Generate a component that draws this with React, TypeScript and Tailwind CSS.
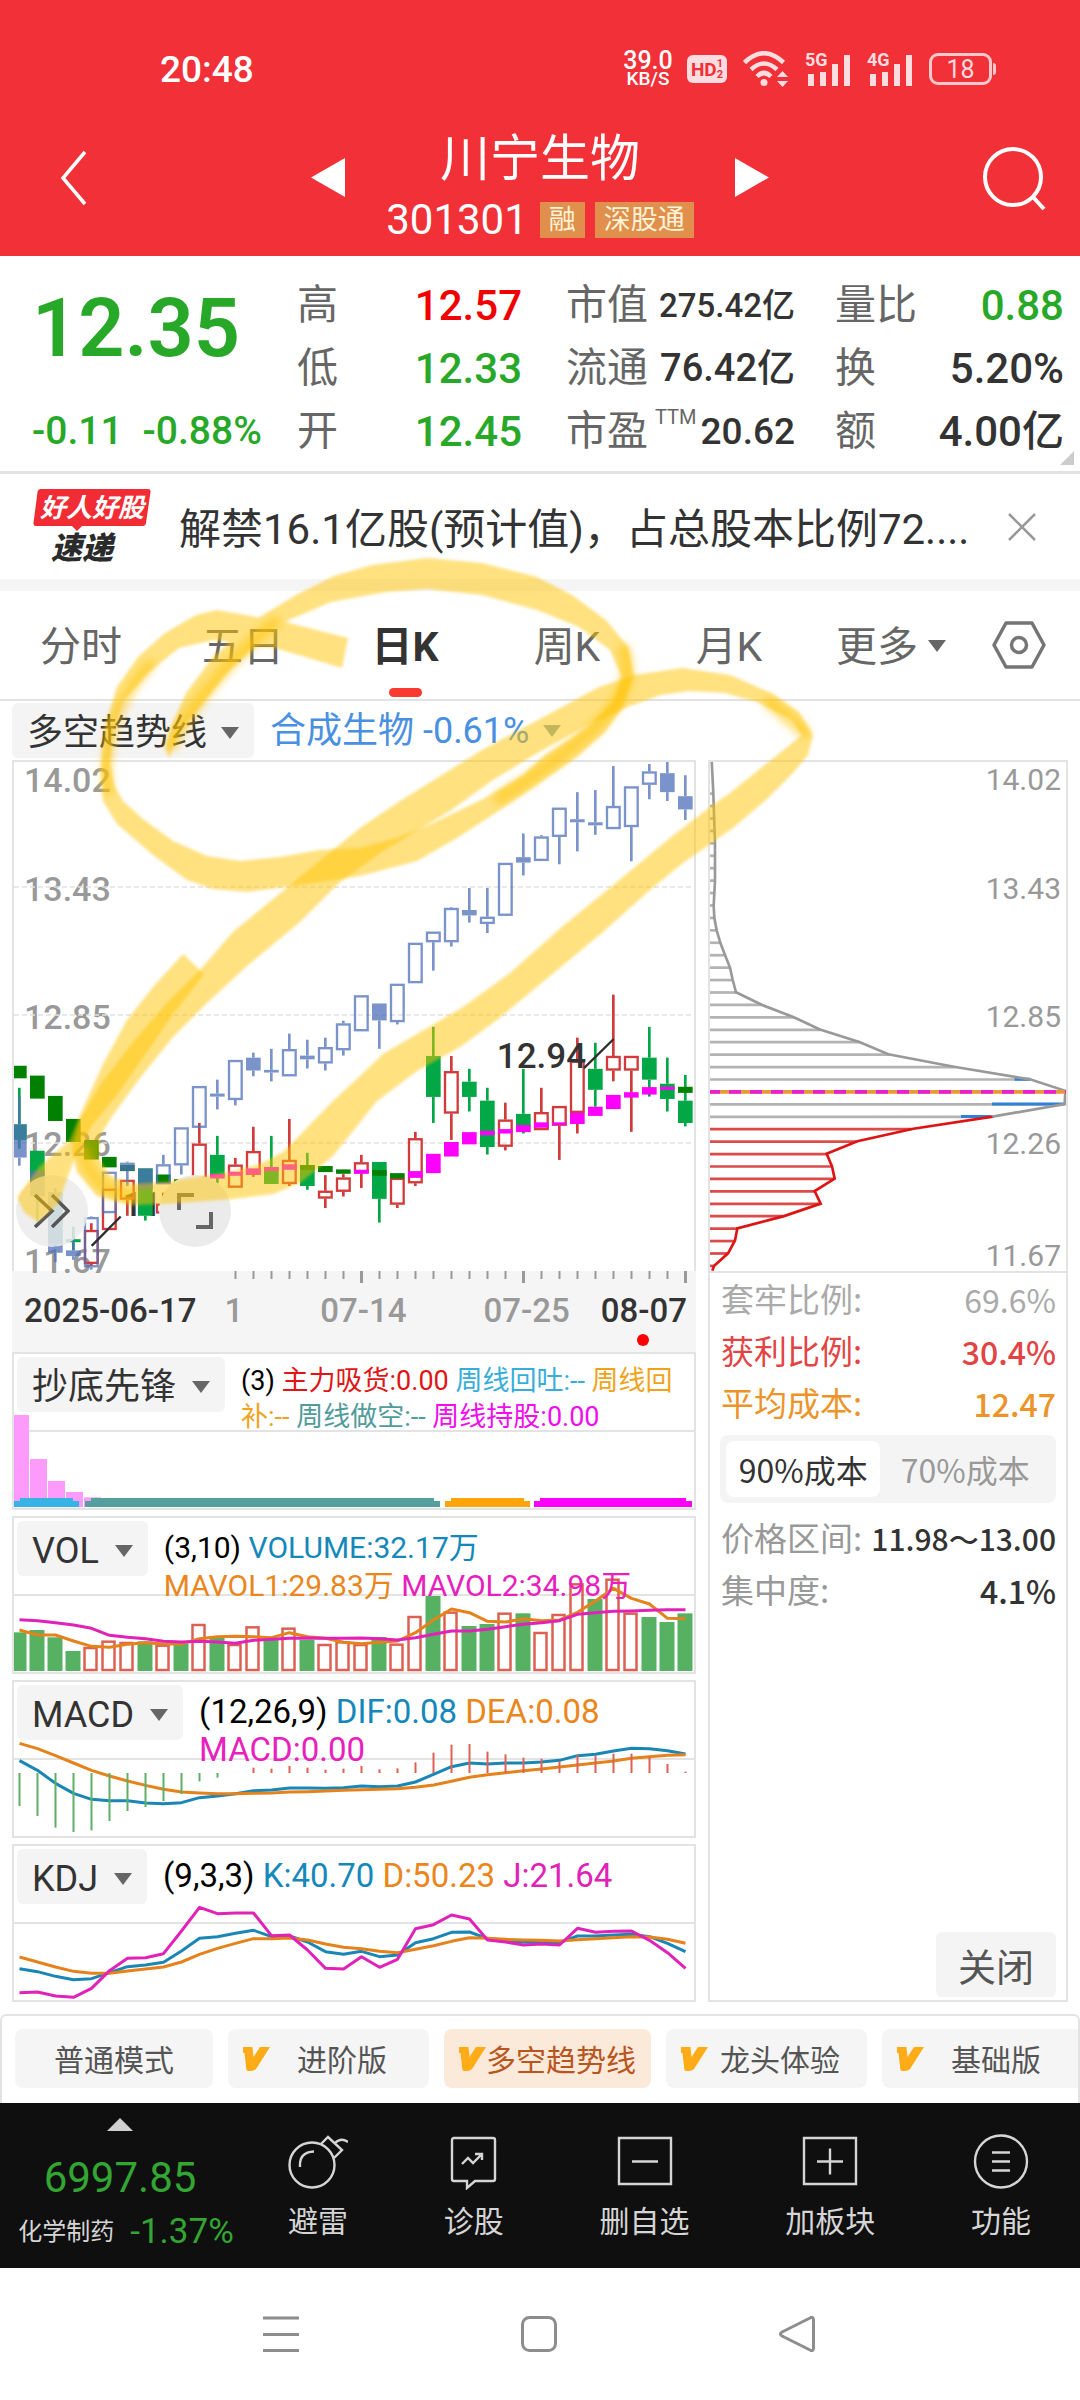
import React from "react";

type Kind = "up" | "down";
/* [high, bodyTop, bodyBottom, low] in plot units, y grows downwards */
type Bar = [number, number, number, number];

const PITCH = 54;
const centre = (i: number) => 22 + PITCH * i;

const trend: { b: Bar; fill?: boolean }[] = [
  { b: [1025, 1108, 1206, 1230], fill: true },
  { b: [1245, 1245, 1320, 1320], fill: true },
  { b: [1310, 1310, 1487, 1515], fill: true },
  { b: [1440, 1480, 1497, 1508], fill: true },
  { b: [1380, 1382, 1530, 1537] },
  { b: [1248, 1248, 1370, 1370] },
  { b: [1218, 1221, 1245, 1290], fill: true },
  { b: [1238, 1238, 1300, 1300], fill: true },
  { b: [1198, 1226, 1285, 1285] },
  { b: [1117, 1117, 1229, 1256] },
  { b: [995, 995, 1118, 1118] },
  { b: [976, 1017, 1026, 1064], fill: true },
  { b: [918, 918, 1036, 1052] },
  { b: [896, 911, 949, 966], fill: true },
  { b: [885, 947, 955, 981], fill: true },
  { b: [840, 886, 966, 966] },
  { b: [858, 905, 916, 943], fill: true },
  { b: [852, 880, 928, 949] },
  { b: [802, 810, 889, 905] },
  { b: [727, 727, 833, 833] },
  { b: [751, 751, 801, 885], fill: true },
  { b: [693, 693, 806, 813] },
  { b: [572, 572, 691, 691] },
  { b: [539, 539, 570, 654] },
  { b: [467, 469, 570, 583] },
  { b: [410, 475, 491, 512], fill: true },
  { b: [410, 495, 516, 543] },
  { b: [336, 336, 492, 492] },
  { b: [249, 319, 335, 373], fill: true },
  { b: [254, 258, 330, 330] },
  { b: [173, 173, 259, 340] },
  { b: [127, 207, 216, 302], fill: true },
  { b: [121, 216, 225, 253], fill: true },
  { b: [50, 168, 236, 236] },
  { b: [110, 110, 230, 331] },
  { b: [44, 66, 105, 148] },
  { b: [30, 71, 127, 153], fill: true },
  { b: [77, 139, 178, 209], fill: true },
];

const price: { k: Kind; b: Bar }[] = [
  { k: "down", b: [1000, 1108, 1154, 1180] },
  { k: "down", b: [1186, 1186, 1320, 1395] },
  { k: "down", b: [1296, 1308, 1460, 1470] },
  { k: "down", b: [1410, 1447, 1456, 1480] },
  { k: "up", b: [1400, 1420, 1520, 1526] },
  { k: "up", b: [1298, 1298, 1420, 1420] },
  { k: "up", b: [1272, 1272, 1330, 1378] },
  { k: "down", b: [1238, 1238, 1378, 1392] },
  { k: "up", b: [1310, 1342, 1371, 1371] },
  { k: "up", b: [1300, 1320, 1360, 1380] },
  { k: "up", b: [1104, 1165, 1300, 1300] },
  { k: "down", b: [1142, 1198, 1262, 1282] },
  { k: "up", b: [1207, 1227, 1295, 1295] },
  { k: "up", b: [1115, 1187, 1257, 1263] },
  { k: "down", b: [1142, 1234, 1284, 1284] },
  { k: "up", b: [1092, 1213, 1284, 1290] },
  { k: "down", b: [1192, 1228, 1290, 1301] },
  { k: "up", b: [1258, 1304, 1327, 1355] },
  { k: "up", b: [1255, 1265, 1307, 1321] },
  { k: "up", b: [1198, 1220, 1252, 1296] },
  { k: "down", b: [1219, 1219, 1328, 1398] },
  { k: "up", b: [1266, 1266, 1345, 1355] },
  { k: "up", b: [1130, 1149, 1282, 1290] },
  { k: "down", b: [820, 906, 1027, 1104] },
  { k: "up", b: [906, 951, 1076, 1154] },
  { k: "down", b: [944, 982, 1027, 1070] },
  { k: "down", b: [1000, 1038, 1175, 1197] },
  { k: "up", b: [1044, 1094, 1174, 1185] },
  { k: "down", b: [944, 1077, 1115, 1135] },
  { k: "up", b: [1000, 1072, 1125, 1125] },
  { k: "up", b: [1054, 1054, 1112, 1213] },
  { k: "up", b: [852, 920, 1074, 1135] },
  { k: "down", b: [867, 944, 1006, 1056] },
  { k: "up", b: [725, 906, 949, 981] },
  { k: "up", b: [906, 906, 949, 1130] },
  { k: "down", b: [820, 911, 976, 1026] },
  { k: "down", b: [911, 988, 1033, 1070] },
  { k: "down", b: [962, 1038, 1104, 1114] },
];

/* [index, top, bottom, bullish] */
const signal: [number, number, number, boolean][] = [
  [0, 935, 972, false], [1, 964, 1032, false], [2, 1024, 1098, false], [3, 1092, 1160, false],
  [4, 1154, 1212, false], [5, 1204, 1235, false], [6, 1228, 1246, false], [8, 1256, 1282, false],
  [9, 1270, 1282, false], [10, 1262, 1275, true], [11, 1255, 1268, true], [12, 1248, 1260, true],
  [13, 1238, 1256, true], [14, 1234, 1246, true], [15, 1226, 1242, true], [16, 1228, 1243, false],
  [17, 1231, 1249, false], [18, 1241, 1254, false], [19, 1242, 1254, true], [20, 1243, 1260, false],
  [21, 1252, 1268, false], [22, 1246, 1266, true], [23, 1195, 1252, true], [24, 1160, 1203, true],
  [25, 1131, 1167, true], [26, 1127, 1140, true], [27, 1122, 1135, true], [28, 1110, 1131, true],
  [29, 1102, 1118, true], [30, 1102, 1110, true], [31, 1074, 1107, true], [32, 1056, 1083, true],
  [33, 1021, 1063, true], [34, 1013, 1029, true], [35, 998, 1020, true], [36, 997, 1006, true],
  [37, 997, 1015, false],
];

function Candle({ i, b, color, fill }: { i: number; b: Bar; color: string; fill: boolean }) {
  const x = centre(i);
  const [h, t, m, l] = b;
  return (
    <g>
      {h < t && <rect x={x - 4} y={h} width={8} height={t - h} fill={color} />}
      {l > m && <rect x={x - 4} y={m} width={8} height={l - m} fill={color} />}
      {fill ? (
        <rect x={x - 22} y={t} width={44} height={m - t} fill={color} />
      ) : (
        <rect x={x - 19} y={t + 3} width={38} height={m - t - 6} fill="none" stroke={color} strokeWidth={7} />
      )}
    </g>
  );
}

function PriceChart() {
  return (
    <svg viewBox="6 38 2040 1503" preserveAspectRatio="none" className="relative block h-full w-full" aria-hidden="true">
      {[407, 785, 1163].map((y) => (
        <line key={y} x1={6} x2={2046} y1={y} y2={y} stroke="#e2e2e2" strokeWidth={4} strokeDasharray="15 9" />
      ))}
      {price.map((p, i) => (
        <Candle key={i} i={i} b={p.b} color={p.k === "up" ? "#d23b3b" : "#02a846"} fill={p.k === "down"} />
      ))}
      {signal.map(([i, t, b, up]) => (
        <rect key={i} x={centre(i) - 22} y={t} width={44} height={b - t} fill={up ? "#ff00ff" : "#028002"} />
      ))}
      <g opacity={0.75}>
        {trend.map((p, i) => (
          <Candle key={i} i={i} b={p.b} color="#4f6fba" fill={!!p.fill} />
        ))}
      </g>
      <path d="M239 1467 L326 1380 M1716 942 L1805 856" stroke="#2e2e2e" strokeWidth={7} fill="none" />
    </svg>
  );
}

const envelope: [number, number][] = [
  [35, 32], [40, 131], [45, 278], [45, 388], [41, 462], [43, 498], [50, 535], [61, 572], [75, 608], [90, 645],
  [98, 681], [108, 718], [185, 755], [280, 791], [360, 828], [478, 865], [565, 901], [762, 938], [990, 975],
  [1096, 1009], [1094, 1048], [878, 1085], [640, 1121], [472, 1158], [380, 1195], [396, 1232], [404, 1268],
  [344, 1305], [362, 1342], [252, 1379], [112, 1415], [105, 1451], [84, 1489], [42, 1526], [37, 1540],
];
const poly = (pts: [number, number][]) => pts.map((p) => p.join(",")).join(" ");

function widthAt(y: number) {
  for (let i = 1; i < envelope.length; i++) {
    const [x0, y0] = envelope[i - 1];
    const [x1, y1] = envelope[i];
    if (y <= y1) return x0 + ((x1 - x0) * (y - y0)) / (y1 - y0);
  }
  return 37;
}

function ChipChart() {
  const rows = Array.from({ length: 39 }, (_, i) => 1526 - i * 36.7);
  return (
    <svg viewBox="30 38 1068 1503" preserveAspectRatio="none" className="block h-full w-full" aria-hidden="true">
      {rows.map((y) => (
        <line key={y} x1={30} x2={widthAt(y)} y1={y} y2={y} stroke={y > 1100 ? "#dc4a4a" : "#b3b3b3"} strokeWidth={8} />
      ))}
      <path d="M944 975H990M876 1048H1094M783 1085H872" stroke="#2f80dc" strokeWidth={9} />
      <polyline points={poly(envelope.slice(0, 22))} fill="none" stroke="#999" strokeWidth={8} />
      <polyline points={poly(envelope.slice(21))} fill="none" stroke="#dd1414" strokeWidth={8} />
      <line x1={30} x2={1098} y1={1012} y2={1012} stroke="#e79b38" strokeWidth={11} />
      <line x1={30} x2={1098} y1={1012} y2={1012} stroke="#e81fd2" strokeWidth={11} strokeDasharray="36 27" strokeDashoffset={6} />
    </svg>
  );
}

const volume: [number, boolean][] = [
  [1087, false], [1080, false], [1102, false], [1143, false], [1131, true], [1112, true], [1116, true], [1114, false],
  [1124, true], [1122, false], [1062, true], [1104, false], [1122, true], [1069, true], [1110, false], [1073, true],
  [1110, false], [1122, true], [1114, true], [1122, true], [1101, false], [1121, true], [1038, true], [978, false],
  [1025, true], [1068, false], [1062, false], [1028, true], [1030, false], [1086, true], [1032, true], [940, true],
  [987, false], [926, true], [1028, true], [1041, false], [1056, false], [1030, false],
];
const mavol1 = [1080, 1095, 1095, 1113, 1129, 1132, 1123, 1118, 1122, 1122, 1106, 1100, 1099, 1100, 1103, 1088, 1100, 1105, 1117, 1121, 1117, 1113, 1088, 1050, 1017, 1028, 1054, 1056, 1046, 1052, 1050, 1027, 993, 955, 985, 1002, 1045, 1046];
const mavol2 = [1049, 1052, 1058, 1065, 1075, 1096, 1102, 1106, 1114, 1116, 1114, 1116, 1120, 1111, 1108, 1105, 1104, 1105, 1105, 1104, 1106, 1110, 1103, 1093, 1083, 1083, 1078, 1070, 1063, 1058, 1052, 1033, 1028, 1024, 1023, 1021, 1019, 1019];
const hist = [440, 470, 505, 518, 513, 485, 455, 443, 425, 404, 366, 355, 341, 325, 328, 320, 325, 331, 328, 320, 330, 327, 309, 280, 256, 254, 277, 285, 295, 298, 305, 287, 290, 283, 283, 295, 314, 337];
const dif = [304, 333, 372, 402, 420, 424, 424, 431, 433, 430, 415, 410, 403, 394, 392, 386, 386, 387, 385, 380, 382, 380, 368, 345, 322, 311, 314, 311, 311, 308, 303, 289, 285, 275, 267, 268, 274, 284];
const dea = [252, 268, 289, 311, 333, 350, 365, 378, 390, 398, 401, 403, 403, 402, 401, 398, 397, 395, 393, 391, 390, 388, 384, 377, 366, 354, 346, 340, 334, 329, 323, 317, 311, 305, 297, 292, 288, 286];
const kLine = [928, 937, 951, 961, 958, 940, 922, 917, 909, 875, 837, 832, 822, 813, 832, 830, 848, 877, 885, 876, 892, 887, 850, 838, 819, 818, 838, 845, 848, 850, 850, 830, 830, 827, 825, 832, 852, 877];
const dLine = [893, 908, 923, 936, 942, 942, 935, 929, 923, 908, 885, 867, 852, 838, 838, 836, 842, 854, 864, 868, 876, 880, 870, 859, 846, 835, 837, 840, 842, 843, 845, 841, 838, 835, 832, 833, 840, 852];
const jLine = [1000, 998, 1010, 1014, 987, 934, 897, 895, 883, 815, 744, 763, 761, 761, 829, 827, 872, 927, 929, 892, 924, 900, 808, 796, 767, 779, 842, 848, 857, 854, 857, 807, 819, 816, 815, 843, 880, 927];

const px = (i: number) => 7.5 + 18 * i;
function Series({ data, top, color }: { data: number[]; top: number; color: string }) {
  return (
    <polyline
      points={data.map((v, i) => `${px(i)},${(v - top) / 3}`).join(" ")}
      fill="none"
      stroke={color}
      strokeWidth={3}
      strokeLinejoin="round"
    />
  );
}

function Caret({ className = "" }: { className?: string }) {
  return (
    <svg viewBox="0 0 18 12" className={"h-3 w-[18px] shrink-0 " + className} aria-hidden="true">
      <path d="M0 0H18L9 12Z" fill="currentColor" />
    </svg>
  );
}

function Panel({ name, legend, children, text }: {
  name: string; legend: React.ReactNode; children: React.ReactNode; text: string;
}) {
  return (
    <section className="grid h-[158px] border-2 border-[#e3e3e3]">
      <svg viewBox="2 2 680 154" preserveAspectRatio="none" className="col-start-1 row-start-1 h-full max-h-[154px] w-full" aria-hidden="true">
        <line x1={2} x2={682} y1={79} y2={79} stroke="#e3e3e3" strokeWidth={2} />
        {children}
      </svg>
      <div className="relative col-start-1 row-start-1 flex items-start gap-4 p-[3px]">
        <button className="flex h-[55px] shrink-0 items-center gap-4 rounded-md bg-[#f4f4f4] px-[15px] pt-[5px] text-4xl leading-none text-[#333]">
          <span>{name}</span>
          <Caret className="text-[#666]" />
        </button>
        <p className={text}>{legend}</p>
      </div>
    </section>
  );
}

function Baseline({ x0, x1, color }: { x0: number; x1: number; color: string }) {
  return <path d={`M${x0} 155V149H${x0 + 6}V146H${x1 - 6}V149H${x1}V155Z`} fill={color} />;
}

function Quote({ label, value, tone = "text-[#333]", size = "text-[42px]", sup }: {
  label: string; value: string; tone?: string; size?: string; sup?: string;
}) {
  return (
    <div className="flex h-[63px] items-center justify-between whitespace-nowrap">
      <dt className="flex text-[41px] text-[#666]">
        {label}
        {sup && <span className="ml-[7px] pt-[6px] text-xl leading-5">{sup}</span>}
      </dt>
      <dd className={"font-medium " + tone + " " + size}>{value}</dd>
    </div>
  );
}

function Vip() {
  return (
    <svg viewBox="0 0 27 24" className="-mt-1 h-6 w-[27px] shrink-0" aria-hidden="true">
      <path d="M0 0H9.5L10.5 10L17 0H27L13 22Q11 24 8 24H5Q3.500 24 3.300 22L1.500 6H0Z" fill="#fdac18" />
    </svg>
  );
}

function Signal({ label }: { label: string }) {
  return (
    <span className="relative block h-[34px] w-[46px] text-[#ffdcdf]">
      <span className="absolute -top-0.5 left-0 text-lg leading-5 font-bold">{label}</span>
      <svg viewBox="0 0 46 34" className="h-full w-full" aria-hidden="true">
        <path d="M3 22H9V34H3ZM15 20H21V34H15ZM27 12H33V34H27ZM39 3H45V34H39Z" fill="currentColor" />
      </svg>
    </span>
  );
}

const loopA =
  "M348 638 L285 622 L217 610 L196 615 L165 633 L138 657 L117 687 L105 727 L101 765 L103 801 L117 824 L153 855 L187 880 L213 889 L247 892 L300 885 L360 876 L417 861 L457 838 L497 812 L537 785 L577 757 L605 732 L623 707 L634 676 L628 647 L606 620 L572 595 L537 577 L482 563 L427 558 L372 565 L334 576 L296 595 L255 620 L213 657 L186 693 L171 727 L165 747 L169 758 L179 733 L200 707 L227 673 L255 647 L289 620 L331 602 L386 592 L427 589 L482 595 L537 610 L579 627 L610 650 L622 677 L613 702 L592 723 L565 742 L545 755 L523 775 L483 799 L433 823 L397 838 L360 848 L320 850 L280 857 L240 861 L207 856 L173 841 L143 819 L123 801 L114 785 L110 763 L114 727 L124 700 L148 673 L179 648 L213 640 L275 648 L342 668 Z";
const loopB =
  "M200 970 L233 932 L300 877 L360 828 L400 801 L450 770 L482 750 L551 713 L599 687 L634 675 L682 668 L730 675 L771 693 L799 712 L813 735 L808 755 L793 773 L767 799 L733 828 L683 863 L650 890 L603 932 L550 976 L497 1020 L460 1047 L417 1071 L377 1101 L333 1156 L300 1183 L273 1194 L233 1199 L167 1204 L133 1205 L97 1196 L77 1172 L72 1149 L80 1120 L100 1085 L133 1042 L167 1003 Z M207 1003 L173 1037 L140 1078 L113 1115 L100 1136 L99 1159 L110 1176 L133 1184 L167 1182 L233 1171 L260 1164 L283 1152 L300 1135 L333 1101 L360 1076 L383 1054 L417 1034 L463 1007 L510 973 L563 926 L617 882 L670 838 L710 807 L730 793 L771 760 L802 735 L792 720 L757 702 L725 693 L689 691 L661 695 L627 707 L585 727 L539 752 L493 780 L450 811 L383 851 L340 882 L300 922 L247 966 Z";
const tail =
  "M183 954 L153 987 L127 1020 L103 1064 L80 1115 L70 1140 L40 1166 L17 1197 L24 1212 L38 1222 L58 1204 L74 1160 L92 1125 L117 1095 L140 1062 L173 1014 L204 974 Z";

function Marker() {
  return (
    <svg viewBox="0 0 1080 2400" preserveAspectRatio="none" className="pointer-events-none absolute inset-0 h-full w-full" aria-hidden="true">
      <defs>
        <filter id="soft" x="-5%" y="-5%" width="110%" height="110%"><feGaussianBlur stdDeviation="1.5" /></filter>
        <filter id="softer" x="-50%" y="-50%" width="200%" height="200%"><feGaussianBlur stdDeviation="4" /></filter>
      </defs>
      <g fill="#ffc300" fillOpacity={0.5}>
        <path d={loopA} filter="url(#soft)" />
        <path d={loopB} fillRule="evenodd" filter="url(#soft)" />
        <path d={tail} filter="url(#soft)" />
      </g>
      <g fill="none" stroke="#ffc300" strokeOpacity={0.55} strokeLinecap="round" filter="url(#softer)">
        <path d="M150 665 Q100 720 108 790" strokeWidth={10} />
        <path d="M275 622 Q205 680 172 745" strokeWidth={12} />
        <path d="M624 650 Q638 690 590 732 Q545 770 500 798" strokeWidth={12} />
        <path d="M770 703 L804 732" strokeWidth={12} />
        <path d="M82 1150 Q92 1190 130 1196" strokeWidth={12} />
      </g>
    </svg>
  );
}

const tabs = ["分时", "五日", "日K", "周K", "月K"];
const modes = [
  { t: "普通模式", v: false, on: false, w: "w-[198px]" },
  { t: "进阶版", v: true, on: false, w: "w-[201px]" },
  { t: "多空趋势线", v: true, on: true, w: "w-[207px]" },
  { t: "龙头体验", v: true, on: false, w: "w-[201px]" },
  { t: "基础版", v: true, on: false, w: "w-[201px]" },
];

const iconCls = "h-14 w-[60px]";
const nav = [
  { t: "避雷", i: (
    <svg viewBox="0 0 60 56" className={iconCls} fill="none" stroke="#d5d5d5" strokeWidth={2.4} aria-hidden="true">
      <circle cx="24" cy="31" r="22.500" />
      <path d="M12 33Q11 18 26 17.500M33 10L40 3L54 16L46 24M47 9Q53 3 60 8" />
    </svg>) },
  { t: "诊股", i: (
    <svg viewBox="0 0 60 56" className={iconCls} fill="none" stroke="#d5d5d5" strokeWidth={2.4} aria-hidden="true">
      <path d="M10 4H49Q51 4 51 6V45Q51 47 49 47H31L23 54V47H10Q8 47 8 45V6Q8 4 10 4ZM18 30L24 24L29 29L38 20M31 20H38V26" />
    </svg>) },
  { t: "删自选", i: (
    <svg viewBox="0 0 60 56" className={iconCls} fill="none" stroke="#d5d5d5" strokeWidth={2.4} aria-hidden="true">
      <path d="M4 4H56V50H4ZM17 27.500H43" />
    </svg>) },
  { t: "加板块", i: (
    <svg viewBox="0 0 60 56" className={iconCls} fill="none" stroke="#d5d5d5" strokeWidth={2.4} aria-hidden="true">
      <path d="M4 4H56V50H4ZM17 27.500H43M30 14.500V40.500" />
    </svg>) },
  { t: "功能", i: (
    <svg viewBox="0 0 60 56" className={iconCls} fill="none" stroke="#d5d5d5" strokeWidth={2.4} aria-hidden="true">
      <circle cx="30" cy="27.500" r="26" />
      <path d="M21 18.500H39M21 27.500H39M21 36.500H39" />
    </svg>) },
];

function Stat({ label, value, tone, strong = true, size = "text-[32px]" }: {
  label: string; value: string; tone: string; strong?: boolean; size?: string;
}) {
  return (
    <div className={"flex h-[52px] items-center justify-between whitespace-nowrap " + tone}>
      <dt className="text-[33px]">{label}</dt>
      <dd className={size + (strong ? " font-medium" : "")}>{value}</dd>
    </div>
  );
}

export default function App() {
  return (
    <div className="relative min-h-screen overflow-hidden bg-white font-['Roboto','Noto_Sans_CJK_SC',sans-serif] text-[#333]">
      <header className="bg-[#f13037] text-white">
        <div className="flex h-24 items-center justify-between pt-[42px] pr-[84px] pl-[160px]">
          <span className="text-[37px] leading-none font-medium">20:48</span>
          <div className="flex items-center gap-[16px]">
            <span className="flex w-[50px] flex-col items-center text-[25px] leading-[20px] font-medium">
              <span>39.0</span>
              <span className="text-[19px] leading-[16px]">KB/S</span>
            </span>
            <span className="-ml-0.5 flex h-7 w-10 items-center justify-center rounded-md bg-[#ffdcdf] text-[#f13037]">
              <span className="text-[19px] leading-none font-bold">HD</span>
              <span className="flex flex-col text-[11px] leading-[11px] font-bold"><span>1</span><span>2</span></span>
            </span>
            <svg viewBox="0 0 46 36" className="h-9 w-[46px]" aria-hidden="true">
              <g fill="none" stroke="#ffdcdf" strokeWidth={4.5}>
                <path d="M1.500 11.500Q21 -7 40.500 11.500M8 18.500Q21 6.500 34 18.500M14 25.500Q21 18.500 28 25.500" />
              </g>
              <circle cx="21" cy="31.500" r="3.500" fill="#ffdcdf" />
              <path d="M34 26L39.500 20L45 26ZM34 30L39.500 36L45 30Z" fill="#ffdcdf" />
            </svg>
            <Signal label="5G" />
            <Signal label="4G" />
            <span className="flex items-center gap-px">
              <span className="flex h-8 w-[63px] items-center justify-center rounded-[9px] border-[3px] border-[#ffc9cc] text-[25px] leading-none text-[#ffdcdf]">18</span>
              <span className="h-3 w-[3px] rounded-r bg-[#ffc9cc]" />
            </span>
          </div>
        </div>
        <div className="flex h-40 items-center justify-between px-[34px] pt-[3px]">
          <button aria-label="返回" className="flex h-[72px] w-20 items-center justify-center">
            <svg viewBox="0 0 28 56" className="h-14 w-7" aria-hidden="true"><path d="M25 2L3 28L25 54" fill="none" stroke="#fff" strokeWidth={3.5} /></svg>
          </button>
          <div className="flex items-center gap-[41px]">
            <button aria-label="上一只"><svg viewBox="0 0 34 39" className="h-[39px] w-[34px]" aria-hidden="true"><path d="M34 0V39L0 19.500Z" fill="#fff" /></svg></button>
            <div className="flex flex-col items-center pt-[10px]">
              <h1 className="text-[50px] leading-[64px]">川宁生物</h1>
              <div className="mt-[11px] flex h-9 items-center gap-[10px]">
                <span className="mr-0.5 text-[42px] leading-9">301301</span>
                <span className="h-9 bg-[#e18f4c] px-[9px] text-[27px] leading-9 text-[#fff3d8]">融</span>
                <span className="h-9 bg-[#e18f4c] px-[9px] text-[27px] leading-9 text-[#fff3d8]">深股通</span>
              </div>
            </div>
            <button aria-label="下一只"><svg viewBox="0 0 34 39" className="h-[39px] w-[34px]" aria-hidden="true"><path d="M0 0V39L34 19.500Z" fill="#fff" /></svg></button>
          </div>
          <button aria-label="搜索" className="flex h-[72px] w-20 items-center justify-end">
            <svg viewBox="0 0 64 64" className="h-16 w-16" fill="none" stroke="#fff" strokeWidth={4} aria-hidden="true">
              <circle cx="31" cy="31" r="28" /><path d="M51 51L62 63" />
            </svg>
          </button>
        </div>
      </header>

      <section className="relative border-b-[3px] border-[#e2e2e2] pt-[18px] pb-2">
        <div className="grid grid-cols-4 gap-x-10 pr-4 pl-7">
          <div className="whitespace-nowrap text-[#28a828]">
            <p className="h-[126px] pl-1 text-[81px] leading-[110px] font-semibold">12.35</p>
            <p className="flex h-[63px] items-center gap-5 pl-1 text-[39px] font-medium"><span>-0.11</span><span>-0.88%</span></p>
          </div>
          <dl className="pr-1">
            <Quote label="高" value="12.57" tone="text-[#f00000]" />
            <Quote label="低" value="12.33" tone="text-[#28a828]" />
            <Quote label="开" value="12.45" tone="text-[#28a828]" />
          </dl>
          <dl>
            <Quote label="市值" value="275.42亿" size="text-[33px]" />
            <Quote label="流通" value="76.42亿" size="text-[38px]" />
            <Quote label="市盈" sup="TTM" value="20.62" size="text-[37px]" />
          </dl>
          <dl>
            <Quote label="量比" value="0.88" tone="text-[#28a828]" />
            <Quote label="换" value="5.20%" size="text-[42px]" />
            <Quote label="额" value="4.00亿" size="text-[42px]" />
          </dl>
        </div>
        <svg viewBox="0 0 14 14" className="absolute right-[6px] bottom-[6px] h-[14px] w-[14px]" aria-hidden="true"><path d="M14 0V14H0Z" fill="#ccc" /></svg>
      </section>

      <section className="flex h-[105px] items-center pr-9 pl-[33px]">
        <div className="flex w-[118px] shrink-0 flex-col items-center italic">
          <span className="relative flex h-[37px] w-full items-center justify-center text-[26px] leading-none font-bold text-white">
            <svg viewBox="0 0 118 42" className="absolute top-0 left-0 h-[42px] w-full" aria-hidden="true">
              <path d="M8 0H115Q118 0 117.500 3L113 34Q112.500 37 110 37H49L44 42L39 37H3Q0 37 .5 34L4.500 3Q5 0 8 0Z" fill="#f22c35" />
            </svg>
            <span className="relative">好人好股</span>
          </span>
          <span className="mt-2 mr-5 text-[31px] leading-[30px] font-black text-[#2b2b2b]">速递</span>
        </div>
        <p className="ml-7 flex-1 pt-[6px] text-[42px] whitespace-nowrap text-[#333]">解禁16.1亿股(预计值)，占总股本比例72....</p>
        <button aria-label="关闭提醒" className="p-2">
          <svg viewBox="0 0 28 28" className="h-7 w-7" aria-hidden="true"><path d="M1 1L27 27M27 1L1 27" stroke="#999" strokeWidth={2.5} /></svg>
        </button>
      </section>
      <div className="h-3 bg-[#f5f5f5]" />

      <nav className="flex h-[110px] border-b-2 border-[#e2e2e2] text-[41px] text-[#666]">
        {tabs.map((t) => (
          <button key={t} className={"flex flex-[3] flex-col items-center justify-between pt-[15px] pb-[2px] " + (t === "日K" ? "font-bold text-[#333]" : "")}>
            <span className="leading-[82px]">{t}</span>
            {t === "日K" && <span className="h-[9px] w-[33px] rounded-full bg-[#fa3a2f]" />}
          </button>
        ))}
        <button className="flex flex-[3] items-start justify-center gap-[10px] pt-[15px]">
          <span className="leading-[82px]">更多</span>
          <Caret className="mt-[34px]" />
        </button>
        <button aria-label="设置" className="flex flex-[2] items-start pt-[30px]">
          <svg viewBox="0 0 54 48" className="ml-5 h-12 w-[54px]" fill="none" stroke="#757575" strokeWidth={3.5} aria-hidden="true">
            <path d="M14 2H40L52 24L40 46H14L2 24Z" strokeLinejoin="round" /><circle cx="27" cy="24" r="7.500" />
          </svg>
        </button>
      </nav>

      <div className="flex h-[59px] items-center gap-4 px-3">
        <button className="flex h-[55px] items-center gap-[14px] rounded-md bg-[#f4f4f4] px-[15px] pt-1 text-4xl leading-none text-[#333]">
          <span>多空趋势线</span><Caret className="text-[#666]" />
        </button>
        <button className="flex items-center gap-[14px] text-[36px] leading-none text-[#4a90e2]">
          <span>合成生物 -0.61%</span><Caret className="text-[#86a7b8]" />
        </button>
      </div>

      <main className="grid grid-cols-[1.9fr_1fr] gap-3 px-3">
        <div className="flex min-w-0 flex-col">
          <div className="relative h-[511px] border-2 border-b-0 border-[#e3e3e3]">
            <ul className="absolute inset-0 text-[34px] leading-9 font-medium text-[#999]">
              <li className="absolute top-[3.5%] left-[10px] -translate-y-1/2">14.02</li>
              <li className="absolute top-[25%] left-[10px] -translate-y-1/2">13.43</li>
              <li className="absolute top-[50%] left-[10px] -translate-y-1/2">12.85</li>
              <li className="absolute top-[75%] left-[10px] -translate-y-1/2">12.26</li>
              <li className="absolute top-[98%] left-[10px] -translate-y-1/2">11.67</li>
            </ul>
            <span className="absolute top-[83%] left-[16%] text-[34px] leading-10 font-medium">11.67</span>
            <PriceChart />
            <span className="absolute top-[54%] left-[71%] text-[35px] leading-10 font-medium">12.94</span>
            <button aria-label="展开" className="absolute bottom-6 left-[2px] flex h-[72px] w-[72px] items-center justify-center rounded-full bg-[#ebebeb]/85">
              <svg viewBox="0 0 36 34" className="h-[34px] w-9" fill="none" stroke="#555" strokeWidth={3.5} aria-hidden="true"><path d="M1 1L18 17L1 33M18 1L34 17L18 33" /></svg>
            </button>
            <button aria-label="全屏" className="absolute bottom-6 left-[145px] flex h-[72px] w-[72px] items-center justify-center rounded-full bg-[#ebebeb]">
              <svg viewBox="0 0 36 36" className="h-9 w-9" fill="none" stroke="#666" strokeWidth={4} aria-hidden="true"><path d="M2 17V2H17M34 19V34H19" /></svg>
            </button>
          </div>
          <div className="grid h-[81px] bg-[#f5f5f5]">
            <svg viewBox="0 0 684 81" preserveAspectRatio="none" className="col-start-1 row-start-1 h-full w-full" aria-hidden="true">
              {Array.from({ length: 26 }, (_, k) => k + 12).map((i) => {
                const major = i === 19 || i === 28 || i === 37;
                return <line key={i} x1={px(i)} x2={px(i)} y1={0} y2={major ? 12 : 8} stroke="#999" strokeWidth={major ? 3 : 2} />;
              })}
              <circle cx="631" cy="69" r="6" fill="#f00" />
            </svg>
            <div className="col-start-1 row-start-1 flex pt-5 pr-[9px] pl-3 text-[33px] leading-10 font-medium whitespace-nowrap text-[#999]">
              <span className="text-[#333]">2025-06-17</span>
              <span className="ml-7">1</span>
              <span className="ml-[77px]">07-14</span>
              <span className="ml-[77px]">07-25</span>
              <span className="ml-auto text-[#333]">08-07</span>
            </div>
          </div>

          <div className="flex flex-col gap-[6px]">
            <Panel
              name="抄底先锋"
              text="pt-[6px] text-[27px] leading-9 break-all"
              legend={<>
                <span className="text-black">(3)</span> <span className="text-[#e01515]">主力吸货:0.00</span> <span className="text-[#38addb]">周线回吐:--</span> <span className="text-[#efa31c]">周线回补:--</span> <span className="text-[#529b9b]">周线做空:--</span> <span className="text-[#f00df0]">周线持股:0.00</span>
              </>}
            >
              {[435, 567, 633, 666, 682].map((v, i) => (
                <rect key={v} x={i * 18} y={(v - 246) / 3 - 82 + 82} width={17} height={(711 - v) / 3} fill="#fd9bfd" />
              ))}
              <Baseline x0={2} x1={67} color="#38b3e6" />
              <Baseline x0={73} x1={428} color="#54a09f" />
              <Baseline x0={433} x1={518} color="#ffa50a" />
              <Baseline x0={522} x1={680} color="#ff00ff" />
            </Panel>
            <Panel
              name="VOL"
              text="pt-2 text-[30px] leading-[38px] whitespace-nowrap"
              legend={<>
                <span className="text-black">(3,10)</span> <span className="text-[#1488bb]">VOLUME:32.17万</span><br />
                <span className="text-[#ea861c]">MAVOL1:29.83万</span> <span className="text-[#e820be]">MAVOL2:34.98万</span>
              </>}
            >
              {volume.map(([v, up], i) => {
                const y = (v - 738) / 3;
                return up ? (
                  <rect key={i} x={px(i) - 7} y={y + 1} width={12} height={153 - y} fill="none" stroke="#dd6152" strokeWidth={2.5} />
                ) : (
                  <rect key={i} x={px(i) - 8} y={y} width={15} height={155 - y} fill="#57b163" />
                );
              })}
              <Series data={mavol1} top={738} color="#e5821c" />
              <Series data={mavol2} top={738} color="#e022b8" />
            </Panel>
            <Panel
              name="MACD"
              text="pt-2 text-[33px] leading-[38px] whitespace-nowrap"
              legend={<>
                <span className="text-black">(12,26,9)</span> <span className="text-[#1488bb]">DIF:0.08</span> <span className="text-[#ea861c]">DEA:0.08</span><br />
                <span className="text-[#e820be]">MACD:0.00</span>
              </>}
            >
              <Series data={dif} top={62} color="#1a86b5" />
              <Series data={dea} top={62} color="#e5821c" />
              {hist.map((v, i) => (
                <line key={i} x1={px(i)} x2={px(i)} y1={93} y2={(v - 62) / 3} stroke={v > 340 ? "#5fae68" : "#dd6152"} strokeWidth={2} />
              ))}
            </Panel>
            <Panel
              name="KDJ"
              text="pt-2 text-[33px] leading-[38px] whitespace-nowrap"
              legend={<>
                <span className="text-black">(9,3,3)</span> <span className="text-[#1488bb]">K:40.70</span> <span className="text-[#ea861c]">D:50.23</span> <span className="text-[#e022b8]">J:21.64</span>
              </>}
            >
              <Series data={kLine} top={554} color="#1a86b5" />
              <Series data={dLine} top={554} color="#e5821c" />
              <Series data={jLine} top={554} color="#e022b8" />
            </Panel>
          </div>
        </div>

        <aside className="flex flex-col border-2 border-[#e3e3e3] font-['Noto_Sans_CJK_SC','Roboto',sans-serif]">
          <div className="relative h-[511px] border-b-2 border-[#e3e3e3]">
            <ChipChart />
            <ul className="absolute inset-0 font-['Roboto',sans-serif] text-[30px] leading-8 text-[#999]">
              <li className="absolute top-[3.5%] right-[5px] -translate-y-1/2">14.02</li>
              <li className="absolute top-[25%] right-[5px] -translate-y-1/2">13.43</li>
              <li className="absolute top-[50%] right-[5px] -translate-y-1/2">12.85</li>
              <li className="absolute top-[75%] right-[5px] -translate-y-1/2">12.26</li>
              <li className="absolute top-[97%] right-[5px] -translate-y-1/2">11.67</li>
            </ul>
          </div>
          <dl className="pr-[10px] pl-[11px]">
            <Stat label="套牢比例:" value="69.6%" tone="text-[#aaa]" strong={false} />
            <Stat label="获利比例:" value="30.4%" tone="text-[#e24444]" />
            <Stat label="平均成本:" value="12.47" tone="text-[#ec9429]" />
          </dl>
          <div className="mx-[10px] mt-[6px] flex h-[68px] rounded-lg bg-[#f4f4f4] p-[6px] text-[32px]">
            <button className="flex-[10] rounded-lg bg-white leading-none whitespace-nowrap text-[#333]">90%成本</button>
            <button className="flex-[11] leading-none whitespace-nowrap text-[#999]">70%成本</button>
          </div>
          <dl className="pt-[9px] pr-[10px] pl-[11px]">
            <div className="flex h-[52px] items-center justify-between whitespace-nowrap">
              <dt className="text-[33px] text-[#999]">价格区间:</dt><dd className="text-[30px] font-medium text-[#333]">11.98～13.00</dd>
            </div>
            <div className="flex h-[52px] items-center justify-between">
              <dt className="text-[33px] text-[#999]">集中度:</dt><dd className="text-[32px] font-medium text-[#333]">4.1%</dd>
            </div>
          </dl>
          <button className="mt-auto mr-[10px] mb-[3px] h-[65px] w-[120px] self-end rounded-md bg-[#f4f4f4] text-[38px] leading-none text-[#555]">关闭</button>
        </aside>
      </main>

      <div className="mt-3 flex h-[89px] gap-[15px] overflow-hidden rounded-t-md border-2 border-b-0 border-[#e3e3e3] px-[13px] pt-[13px]">
        {modes.map((m) => (
          <button
            key={m.t}
            className={
              "flex h-[59px] shrink-0 items-center rounded-lg pt-1 text-[30px] leading-none whitespace-nowrap " +
              m.w +
              (m.on ? " bg-[#fbead9] text-[#b9551f]" : " bg-[#f5f5f5] text-[#555]") +
              (m.v ? " px-[15px]" : "")
            }
          >
            {m.v && <Vip />}
            <span className="flex-1 text-center">{m.t}</span>
          </button>
        ))}
      </div>

      <footer className="flex h-[165px] bg-[#0f0f0f] text-[#d5d5d5]">
        <button className="flex w-[240px] shrink-0 flex-col items-center pt-[15px] whitespace-nowrap">
          <svg viewBox="0 0 26 13" className="h-[13px] w-[26px]" aria-hidden="true"><path d="M13 0L26 13H0Z" fill="#d0d0d0" /></svg>
          <span className="mt-[22px] text-[42px] leading-[50px] text-[#33a532]">6997.85</span>
          <span className="mt-1 ml-3 flex items-center gap-4">
            <span className="text-[24px] leading-[50px]">化学制药</span>
            <span className="text-[35px] leading-[50px] text-[#33a532]">-1.37%</span>
          </span>
        </button>
        <div className="flex flex-1 justify-between pr-[49px] pl-12 text-[30px]">
          {nav.map((n) => (
            <button key={n.t} className="flex flex-col items-center pt-[31px]">
              {n.i}
              <span className="mt-[10px] leading-[44px]">{n.t}</span>
            </button>
          ))}
        </div>
      </footer>

      <div className="flex h-[132px] justify-center gap-[222px] pt-12 pr-[3px]">
        <button aria-label="最近任务" className="h-9"><svg viewBox="0 0 36 36" className="h-9 w-9" stroke="#8d8d8d" strokeWidth={3} aria-hidden="true"><path d="M0 2H36M0 18.500H36M0 34.500H36" /></svg></button>
        <button aria-label="主屏幕" className="h-9"><svg viewBox="0 0 36 36" className="h-9 w-9" fill="none" stroke="#8d8d8d" strokeWidth={3} aria-hidden="true"><rect x="1.500" y="1.500" width="33" height="33" rx="7" /></svg></button>
        <button aria-label="后退" className="h-9"><svg viewBox="0 0 36 36" className="h-9 w-9" fill="none" stroke="#8d8d8d" strokeWidth={3} aria-hidden="true"><path d="M31 2Q34.500 0 34.500 4V32Q34.500 36 31 34L3 20Q0 18 3 16Z" strokeLinejoin="round" /></svg></button>
      </div>
      <Marker />
    </div>
  );
}
